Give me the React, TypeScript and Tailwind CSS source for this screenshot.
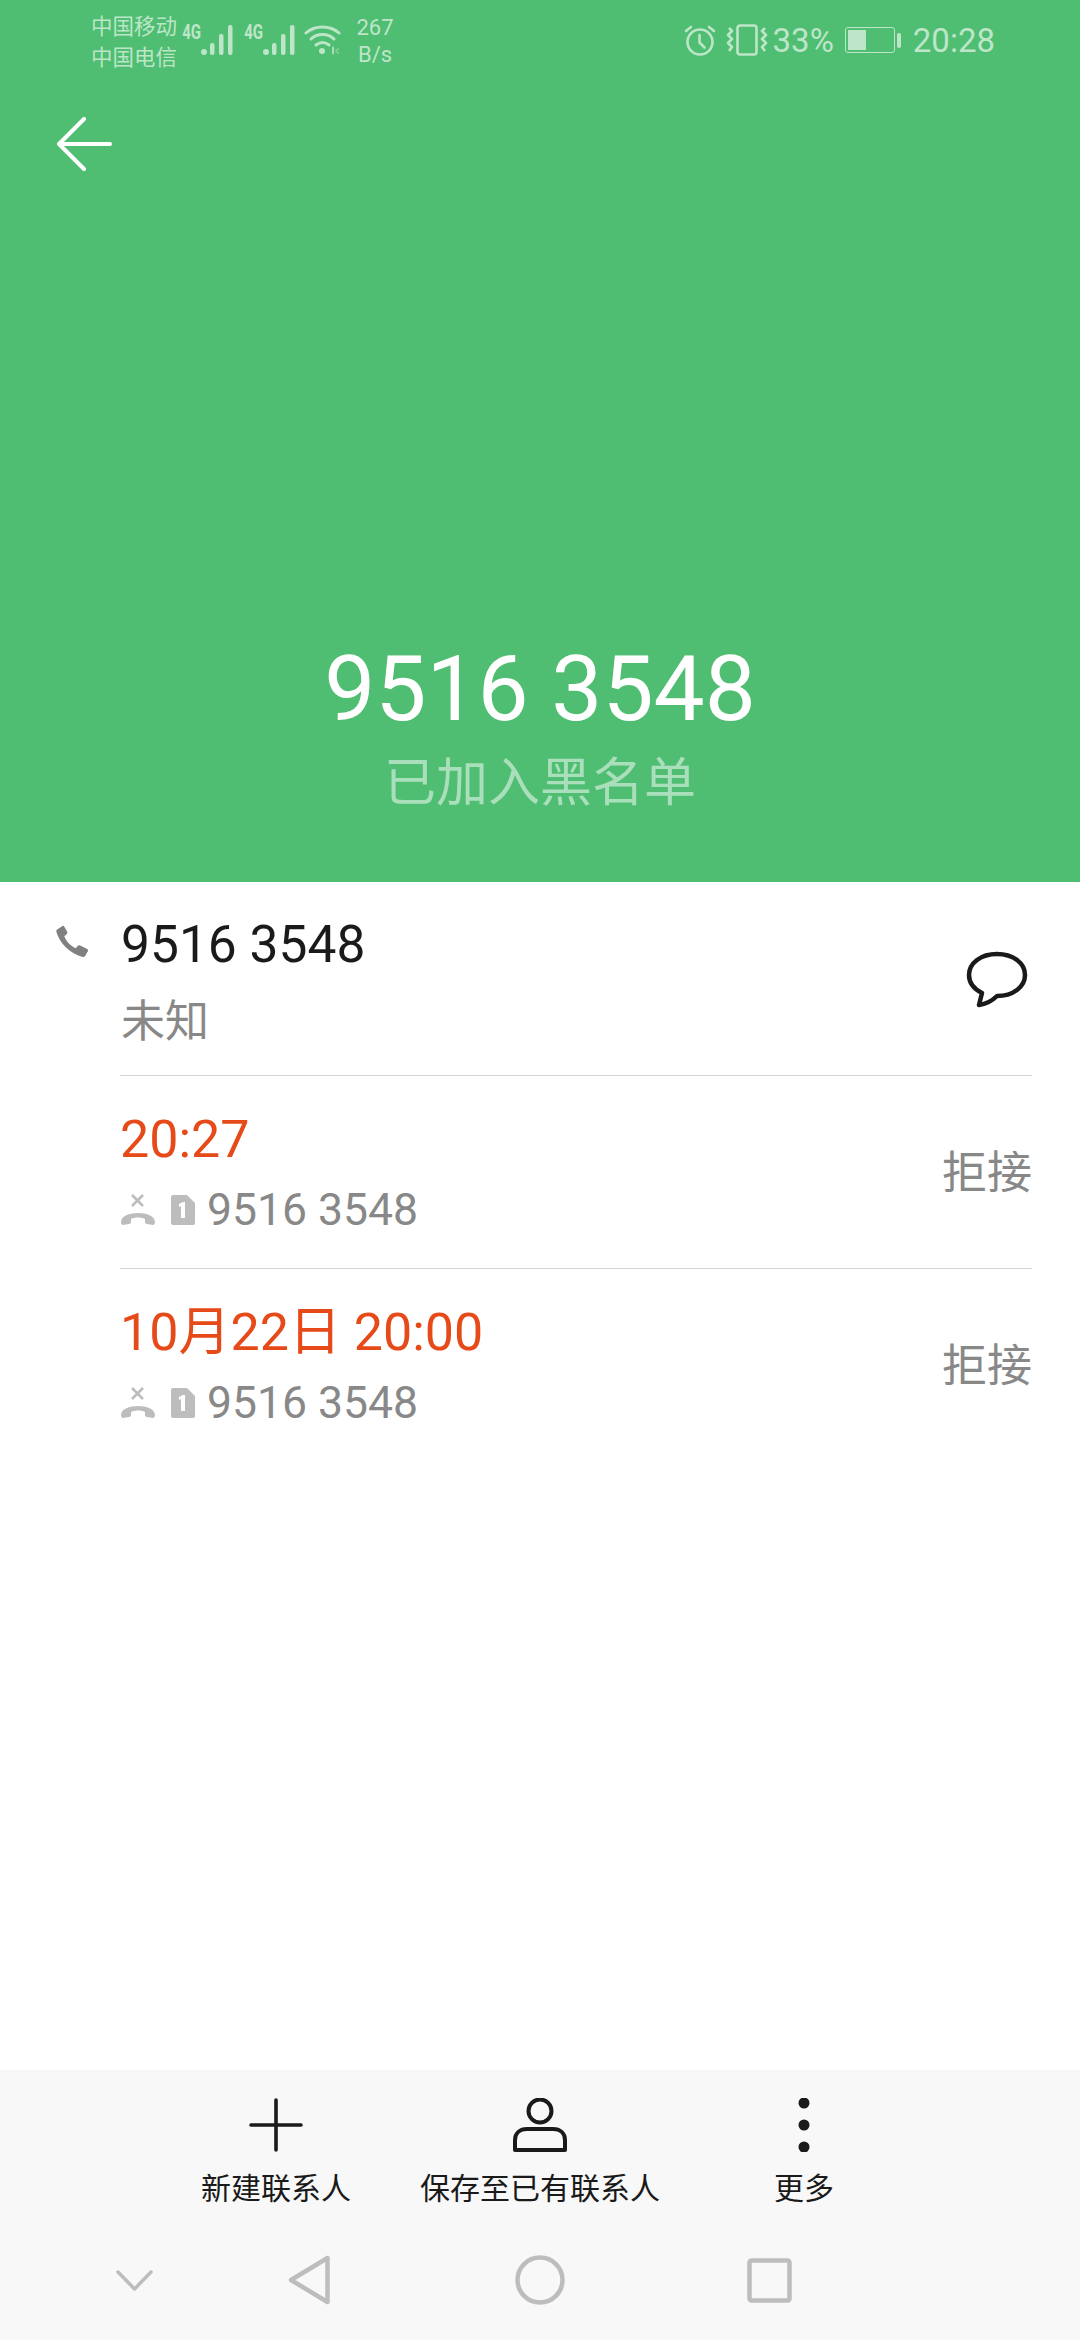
const roboto = "font-['Roboto','Noto_Sans_CJK_SC',sans-serif]";

function Signal() {
  return (
    <svg width="33" height="30" viewBox="0 0 33 30" fill="#bde6c8">
      <circle cx="3" cy="27" r="3" />
      <rect x="9" y="18" width="4.500" height="12" rx="2" />
      <rect x="18" y="9" width="4.500" height="21" rx="2" />
      <rect x="27" y="0" width="4.500" height="30" rx="2" />
    </svg>
  );
}

function FourG() {
  return (
    <div className="w-[18px] flex justify-center -mt-[16px]">
      <span className="font-['Roboto'] text-[20px] font-bold leading-none text-[#bde6c8] scale-x-75">4G</span>
    </div>
  );
}

function StatusBar() {
  return (
    <div className="h-[80px] flex items-start justify-between pl-[91px] pr-[85px] text-[#bde6c8]">
      <div className="flex items-center h-[80px]">
        <div className="w-[86px] text-[21.5px] leading-[31px] mt-[3px]">
          <div>中国移动</div>
          <div>中国电信</div>
        </div>
        <div className="flex items-center ml-[6px]">
          <FourG />
          <Signal />
          <div className="ml-[11px]"><FourG /></div>
          <Signal />
        </div>
        <svg className="ml-[8px]" width="38" height="30" viewBox="0 0 38 30" fill="none" stroke="#bde6c8" strokeWidth="3" strokeLinecap="round">
          <path d="M2 8C11 0 26 0 35 8" />
          <path d="M7 14C13 8 24 8 30 14" />
          <path d="M12 20C16 17 21 17 25 20" />
          <circle cx="18" cy="26" r="3" fill="#bde6c8" stroke="none" />
          <path d="M29 22.500v6" strokeWidth="2" opacity="0.8" />
          <path d="M34 24l-2 2 2 2" strokeWidth="2" opacity="0.4" />
        </svg>
        <div className="w-[40px] ml-[13px] text-center font-['Roboto'] text-[22px] leading-[27px] mt-[2px]">
          <div>267</div>
          <div>B/s</div>
        </div>
      </div>
      <div className="flex items-center h-[80px]">
        <svg width="32" height="32" viewBox="0 0 32 32" fill="none" stroke="#bde6c8" strokeWidth="2.600" strokeLinecap="round" strokeLinejoin="round">
          <circle cx="16" cy="18" r="12.500" />
          <path d="M15.500 11v7.500l5 5" />
          <path d="M2 7l5-4M30 7l-5-4" />
        </svg>
        <svg className="ml-[10px]" width="42" height="32" viewBox="0 0 42 32" fill="none" stroke="#bde6c8" strokeWidth="2.600" strokeLinejoin="round">
          <rect x="11.500" y="1.500" width="19" height="29" rx="2.500" />
          <path d="M3 4l3 3-4 4 4 4-4 4 4 4-3 4" />
          <path d="M39 4l-3 3 4 4-4 4 4 4-4 4 3 4" />
        </svg>
        <span className="ml-[5px] font-['Roboto'] text-[33px] leading-none">33%</span>
        <div className="ml-[11px] w-[50px] h-[26px] rounded-[3px] border-[1.5px] border-[#bde6c8] p-[2px]">
          <div className="w-[18px] h-full bg-[#bde6c8]" />
        </div>
        <div className="ml-[2px] w-[4px] h-[15px] rounded-[2px] bg-[#bde6c8]" />
        <span className="ml-[12px] font-['Roboto'] text-[33px] leading-none">20:28</span>
      </div>
    </div>
  );
}

function CallRow({ time }: { time: string }) {
  return (
    <div className="ml-[120px] mr-[48px] h-[193px] border-t-[1.5px] border-[#d4d4d4] flex items-center justify-between">
      <div>
        <div className="text-[52px] leading-[60px] text-[#e64a19]">{time}</div>
        <div className="mt-[16px] flex items-center h-[48px]">
          <svg width="36" height="34" viewBox="0 0 36 34" fill="#bdbdbd">
            <path d="M12 2l11 11M23 2L12 13" stroke="#bdbdbd" strokeWidth="2.600" fill="none" />
            <path d="M1 29c0-12 34-12 34 0 0 2-1 3-2 3l-6-1c-1 0-2-1-2-2v-3c-4-2-10-2-14 0v3c0 1-1 2-2 2l-6 1c-1 0-2-1-2-3z" />
          </svg>
          <svg className="ml-[15px]" width="24" height="30" viewBox="0 0 24 30">
            <path d="M2 0h14l8 8v20a2 2 0 0 1-2 2H2a2 2 0 0 1-2-2V2a2 2 0 0 1 2-2z" fill="#bdbdbd" />
            <path d="M8 9l4-2h2v16h-4V11l-2 1z" fill="#ffffff" />
          </svg>
          <span className="ml-[12px] text-[44.5px] leading-none text-[#888888]">9516 3548</span>
        </div>
      </div>
      <span className="text-[45px] leading-none text-[#888888] mt-[3px]">拒接</span>
    </div>
  );
}

function BarAction({ label, children }: { label: string; children: React.ReactNode }) {
  return (
    <div className="flex flex-col items-center">
      <div className="h-[54px] flex items-center">{children}</div>
      <span className="mt-[19px] text-[30px] leading-[36px] text-[#1a1a1a]">{label}</span>
    </div>
  );
}

export default function App() {
  return (
    <div className={`w-[1080px] h-[2340px] bg-white flex flex-col ${roboto}`}>
      {/* Header */}
      <header className="h-[882px] bg-[#4fbd72] flex flex-col">
        <StatusBar />
        <svg className="ml-[57px] mt-[37px]" width="55" height="54" viewBox="0 0 55 54" fill="none" stroke="#ffffff" strokeWidth="4" strokeLinecap="round" strokeLinejoin="round">
          <path d="M27 2L2 27l25 25M2 27h51" />
        </svg>
        <div className="mt-[468px] text-center text-[91px] leading-[100px] text-white">9516 3548</div>
        <div className="mt-[15px] text-center text-[52px] leading-[60px] text-[#a9dfba]">已加入黑名单</div>
      </header>

      {/* Details */}
      <main className="flex-1">
        <div className="h-[193px] flex">
          <svg className="ml-[55px] mt-[43px]" width="34" height="34" viewBox="0 0 24 24" fill="#808080">
            <path d="M1.500 3.200 5 .8c.6-.4 1.300-.2 1.600.4l2 3.600c.3.6.2 1.200-.3 1.600L6.600 7.900c1.300 3.600 4.300 6.800 8 8.500l1.500-1.700c.4-.5 1.100-.6 1.700-.3l4.900 2.500c.6.300.8 1 .5 1.600l-1.900 3.300c-.4.6-1.100.9-1.800.7C10 20 3.300 12.800 1 5c-.2-.7 0-1.400.5-1.800z" />
          </svg>
          <div className="ml-[32px] flex-1">
            <div className="mt-[33px] text-[51.5px] leading-[60px] text-[#1a1a1a]">9516 3548</div>
            <div className="mt-[22px] text-[44px] leading-[50px] text-[#888888]">未知</div>
          </div>
          <svg className="mr-[52px] mt-[69px]" width="62" height="58" viewBox="0 0 62 58" fill="none" stroke="#1a1a1a" strokeWidth="4.500" strokeLinejoin="round">
            <path d="M31 3C15 3 3 12 3 24c0 8 5 14 13 18l-3 12c7-1 13-4 18-9 16 0 28-9 28-21S47 3 31 3z" />
          </svg>
        </div>
        <CallRow time="20:27" />
        <CallRow time="10月22日 20:00" />
      </main>

      {/* Bottom bar */}
      <footer className="h-[270px] bg-[#f8f8f8]">
        <div className="h-[170px] pt-[28px] pl-[201px] flex gap-[69px]">
          <BarAction label="新建联系人">
            <svg width="54" height="54" viewBox="0 0 54 54" stroke="#1a1a1a" strokeWidth="3.600" strokeLinecap="round">
              <path d="M27 2v50M2 27h50" />
            </svg>
          </BarAction>
          <BarAction label="保存至已有联系人">
            <svg width="54" height="54" viewBox="0 0 54 54" fill="none" stroke="#1a1a1a" strokeWidth="4" strokeLinejoin="round">
              <circle cx="27" cy="13" r="11.500" />
              <path d="M2 52V42c0-7 5-11 12-11h26c7 0 12 4 12 11v10z" />
            </svg>
          </BarAction>
          <div className="ml-[45px]">
            <BarAction label="更多">
              <svg width="12" height="54" viewBox="0 0 12 54" fill="#1a1a1a">
                <circle cx="6" cy="5" r="5.500" />
                <circle cx="6" cy="27" r="5.500" />
                <circle cx="6" cy="49" r="5.500" />
              </svg>
            </BarAction>
          </div>
        </div>
        <div className="h-[100px] flex items-center pl-[116px] pb-[20px]">
          <svg width="37" height="21" viewBox="0 0 37 21" fill="none" stroke="#bdbdbd" strokeWidth="3.500" strokeLinecap="round" strokeLinejoin="round">
            <path d="M2 2l16.500 17L35 2" />
          </svg>
          <svg className="ml-[135px]" width="42" height="50" viewBox="0 0 42 50" fill="none" stroke="#bdbdbd" strokeWidth="4.500" strokeLinejoin="round">
            <path d="M39.500 3v44L3 25z" />
          </svg>
          <svg className="ml-[185px]" width="50" height="50" viewBox="0 0 50 50" fill="none" stroke="#bdbdbd" strokeWidth="4.500">
            <circle cx="25" cy="25" r="22.500" />
          </svg>
          <svg className="ml-[182px]" width="45" height="45" viewBox="0 0 45 45" fill="none" stroke="#bdbdbd" strokeWidth="4.500" strokeLinejoin="round">
            <rect x="2.500" y="2.500" width="40" height="40" rx="2" />
          </svg>
        </div>
      </footer>
    </div>
  );
}
